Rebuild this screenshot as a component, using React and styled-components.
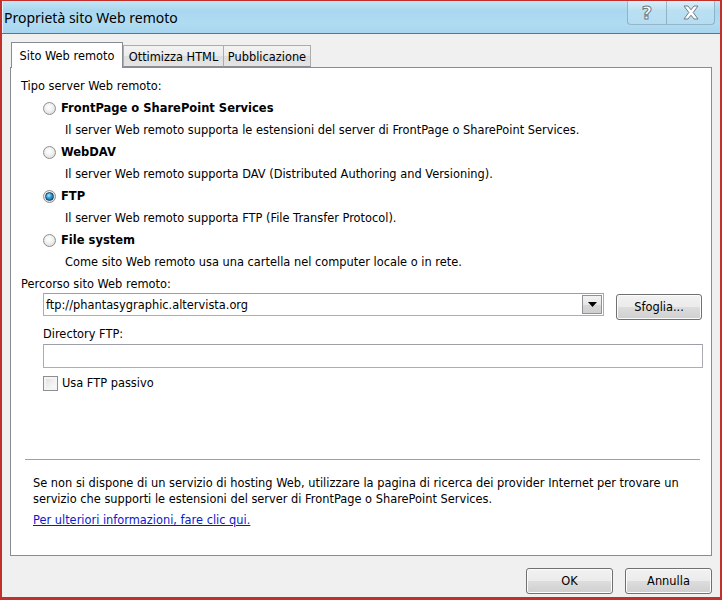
import React from 'react';
import styled, { createGlobalStyle } from 'styled-components';

const GlobalStyle = createGlobalStyle`
  html, body {
    margin: 0;
    padding: 0;
    background: #f0f0f0;
  }
  * {
    box-sizing: border-box;
  }
`;

const Window = styled.div`
  width: 722px;
  height: 600px;
  display: flex;
  flex-direction: column;
  background: #f0f0f0;
  border: 2px solid #c2302c;
  border-top-width: 1px;
  border-bottom-width: 3px;
  font-family: 'DejaVu Sans', Tahoma, sans-serif;
  font-size: 11.4px;
  color: #000000;
  overflow: hidden;
`;

const TitleBar = styled.div`
  height: 33px;
  flex: none;
  display: flex;
  align-items: flex-start;
  justify-content: space-between;
  background: linear-gradient(180deg, #c4e6f7 0%, #a8d7ef 30%, #b0dcf2 70%, #a9d6ee 100%);
  border-bottom: 1px solid #4f7a96;
  box-shadow: inset 1px 0 0 #e8f4fb;
`;

const Title = styled.div`
  font-family: 'Noto Sans', 'Open Sans', sans-serif;
  font-size: 14px;
  padding: 7px 0 0 2px;
  color: #000000;
`;

const Caption = styled.div`
  display: flex;
  margin-right: 5px;
`;

const CaptionButton = styled.div`
  width: ${p => p.$w}px;
  height: 24px;
  display: flex;
  align-items: center;
  justify-content: center;
  border: 1px solid rgba(110, 140, 165, 0.55);
  border-top: none;
  border-left-width: ${p => (p.$first ? 1 : 0)}px;
  border-radius: ${p => (p.$first ? '0 0 0 4px' : '0 0 4px 0')};
  background: linear-gradient(180deg, rgba(255,255,255,0.35), rgba(255,255,255,0.05));
`;

const HelpGlyph = styled.span`
  font-family: 'DejaVu Sans', sans-serif;
  font-weight: bold;
  font-size: 18px;
  color: #ffffff;
  -webkit-text-stroke: 1px #6d7b88;
  line-height: 1;
`;

const Body = styled.div`
  flex: 1;
  display: flex;
  flex-direction: column;
  padding: 8px 8px 0 8px;
`;

const TabStrip = styled.div`
  display: flex;
  align-items: flex-end;
  height: 25px;
  padding-left: 1px;
  position: relative;
  z-index: 1;
`;

const Tab = styled.div`
  height: ${p => (p.$active ? 26 : 22)}px;
  display: flex;
  align-items: center;
  justify-content: center;
  white-space: nowrap;
  padding-top: ${p => (p.$active ? 1 : 2)}px;
  border: 1px solid ${p => (p.$active ? '#898c95' : '#acacac')};
  border-bottom: ${p => (p.$active ? 'none' : '1px solid #898c95')};
  margin-right: ${p => (p.$active ? 0 : -1)}px;
  margin-bottom: ${p => (p.$active ? -1 : 0)}px;
  background: ${p => (p.$active ? '#ffffff' : 'linear-gradient(180deg, #f3f3f3 0%, #ebebeb 50%, #dedede 51%, #e5e5e5 100%)')};
  width: ${p => p.$w}px;
`;

const Panel = styled.div`
  width: 702px;
  height: 489px;
  background: #ffffff;
  border: 1px solid #898c95;
  padding: 7px 0 0 10px;
  display: flex;
  flex-direction: column;
`;

const Row = styled.div`
  height: 22px;
  display: flex;
  align-items: center;
  padding-left: ${p => p.$indent || 0}px;
  white-space: nowrap;
`;

const RadioLabel = styled.span`
  font-weight: bold;
  font-size: 11.5px;
  margin-left: 5px;
`;

const Radio = styled.span`
  width: 13px;
  height: 13px;
  border-radius: 50%;
  border: 1px solid #8e8f8f;
  background: radial-gradient(circle at 45% 40%, #ffffff 0%, #f4f4f4 35%, #d3d3d3 100%);
  display: flex;
  align-items: center;
  justify-content: center;
  flex: none;

  &::after {
    content: '';
    display: ${p => (p.$checked ? 'block' : 'none')};
    width: 7px;
    height: 7px;
    border-radius: 50%;
    background: radial-gradient(circle at 40% 35%, #a7eaff 0%, #2a98d6 45%, #0d4f7c 100%);
    border: 1px solid #14405f;
  }
`;

const FieldRow = styled.div`
  display: flex;
  align-items: flex-start;
  padding-left: 22px;
  margin-top: -2px;
`;

const Combo = styled.div`
  width: 561px;
  height: 23px;
  border: 1px solid #abadb3;
  border-top-color: #9c9fa7;
  display: flex;
  align-items: center;
  justify-content: space-between;
  padding: 0 1px 0 2px;
`;

const DropButton = styled.div`
  width: 20px;
  height: 19px;
  border: 1px solid #8f929a;
  background: linear-gradient(180deg, #f2f2f2 0%, #e6e6e6 50%, #d6d6d6 51%, #cfcfcf 100%);
  display: flex;
  align-items: center;
  justify-content: center;
`;

const Button = styled.div`
  width: ${p => p.$w}px;
  height: ${p => p.$h || 26}px;
  border: 1px solid #707070;
  border-radius: 3px;
  background: linear-gradient(180deg, #f2f2f2 0%, #ebebeb 50%, #dddddd 51%, #cfcfcf 100%);
  box-shadow: inset 0 0 0 1px #fcfcfc;
  display: flex;
  align-items: center;
  justify-content: center;
  margin-left: ${p => p.$ml || 0}px;
  margin-top: ${p => p.$mt || 0}px;
`;

const Label = styled.div`
  padding-left: 22px;
  height: 20px;
  margin-top: 4px;
  display: flex;
  align-items: center;
`;

const TextInput = styled.div`
  margin-left: 22px;
  width: 660px;
  height: 24px;
  border: 1px solid #abadb3;
  border-top-color: #9c9fa7;
`;

const CheckRow = styled.div`
  display: flex;
  align-items: center;
  padding-left: 22px;
  height: 16px;
  margin-top: 7px;
`;

const Checkbox = styled.span`
  width: 15px;
  height: 15px;
  border: 1px solid #8e8f8f;
  background: linear-gradient(135deg, #dcdcdc 0%, #f2f2f2 60%, #ffffff 100%);
  box-shadow: inset 0 0 0 2px #f4f4f4;
  margin-right: 4px;
  flex: none;
`;

const Separator = styled.div`
  margin: 68px 0 0 4px;
  width: 675px;
  height: 1px;
  background: #a0a0a0;
`;

const Info = styled.div`
  padding-left: 12px;
  margin-top: 15px;
  line-height: 16px;
  white-space: nowrap;
`;

const Link = styled.a`
  display: block;
  padding-left: 12px;
  margin-top: 5px;
  color: #0a19cc;
  text-decoration: underline;
  line-height: 16px;
`;

const Footer = styled.div`
  display: flex;
  justify-content: flex-end;
  padding: 12px 0 0 0;
`;

const CloseIcon = () => (
  <svg width="18" height="15" viewBox="0 0 18 15">
    <path
      d="M2 1h4L9 4.8 12 1h4l-4.8 6.5L16 14h-4L9 10.2 6 14H2l4.8-6.5z"
      fill="#ffffff"
      stroke="#6d7b88"
      strokeWidth="1"
      strokeLinejoin="round"
    />
  </svg>
);

const servers = [
  {
    name: 'FrontPage o SharePoint Services',
    desc: 'Il server Web remoto supporta le estensioni del server di FrontPage o SharePoint Services.',
  },
  {
    name: 'WebDAV',
    desc: 'Il server Web remoto supporta DAV (Distributed Authoring and Versioning).',
  },
  {
    name: 'FTP',
    desc: 'Il server Web remoto supporta FTP (File Transfer Protocol).',
    checked: true,
  },
  {
    name: 'File system',
    desc: 'Come sito Web remoto usa una cartella nel computer locale o in rete.',
  },
];

const App = () => {
  return (
    <>
      <GlobalStyle />
      <Window>
        <TitleBar>
          <Title>Proprietà sito Web remoto</Title>
          <Caption>
            <CaptionButton $w={40} $first>
              <HelpGlyph>?</HelpGlyph>
            </CaptionButton>
            <CaptionButton $w={48}>
              <CloseIcon />
            </CaptionButton>
          </Caption>
        </TitleBar>
        <Body>
          <TabStrip>
            <Tab $active $w={112}>Sito Web remoto</Tab>
            <Tab $w={101}>Ottimizza HTML</Tab>
            <Tab $w={88}>Pubblicazione</Tab>
          </TabStrip>
          <Panel>
            <Row>Tipo server Web remoto:</Row>
            {servers.map(s => (
              <React.Fragment key={s.name}>
                <Row $indent={22}>
                  <Radio $checked={s.checked} />
                  <RadioLabel>{s.name}</RadioLabel>
                </Row>
                <Row $indent={44}>{s.desc}</Row>
              </React.Fragment>
            ))}
            <Row>Percorso sito Web remoto:</Row>
            <FieldRow>
              <Combo>
                <span>ftp://phantasygraphic.altervista.org</span>
                <DropButton>
                  <svg width="9" height="5" viewBox="0 0 9 5">
                    <path d="M0 0h9L4.5 5z" fill="#000000" />
                  </svg>
                </DropButton>
              </Combo>
              <Button $w={86} $ml={12} $mt={1}>Sfoglia...</Button>
            </FieldRow>
            <Label>Directory FTP:</Label>
            <TextInput />
            <CheckRow>
              <Checkbox />
              <span>Usa FTP passivo</span>
            </CheckRow>
            <Separator />
            <Info>
              Se non si dispone di un servizio di hosting Web, utilizzare la pagina di ricerca dei provider Internet per trovare un
              <br />
              servizio che supporti le estensioni del server di FrontPage o SharePoint Services.
            </Info>
            <Link href="#">Per ulteriori informazioni, fare clic qui.</Link>
          </Panel>
          <Footer>
            <Button $w={87}>OK</Button>
            <Button $w={87} $ml={12}>Annulla</Button>
          </Footer>
        </Body>
      </Window>
    </>
  );
};

export default App;
